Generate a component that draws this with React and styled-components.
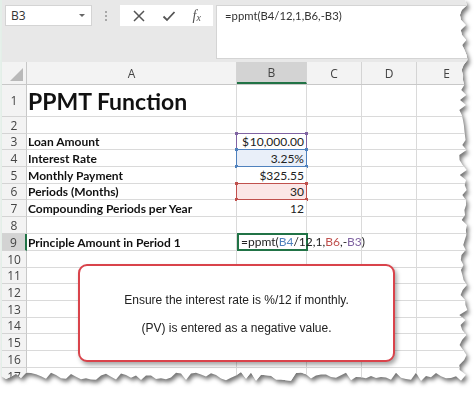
import React from "react";
import styled, { createGlobalStyle } from "styled-components";

const GlobalStyle = createGlobalStyle`
  body {
    margin: 0;
    background: #ffffff;
    font-family: "Lato", "Liberation Sans", sans-serif;
  }
`;

/* torn paper edge on the right and bottom */
let seed = 11;
const rnd = () => {
  seed = (seed * 9301 + 49297) % 233280;
  return seed / 233280;
};
const tornPts = ["0px 0px"];
for (let y = 0; y <= 374; y += 5) tornPts.push(`${459 + rnd() * 9}px ${y}px`);
for (let x = 466; x >= 0; x -= 5) tornPts.push(`${x}px ${372 + rnd() * 9}px`);
const TORN = `polygon(${tornPts.join(",")})`;

const colWidths = [210, 70, 55, 55, 60];
const colNames = ["A", "B", "C", "D", "E"];

const rows = [
  { n: 1, h: 32, a: "PPMT Function", title: true },
  { n: 2, h: 17 },
  { n: 3, h: 16, a: "Loan Amount", b: "10,000.00", money: true, hl: "purple" },
  { n: 4, h: 17, a: "Interest Rate", b: "3.25%", hl: "blue" },
  { n: 5, h: 17, a: "Monthly Payment", b: "$325.55" },
  { n: 6, h: 16, a: "Periods (Months)", b: "30", hl: "red" },
  { n: 7, h: 17, a: "Compounding Periods per Year", b: "12" },
  { n: 8, h: 17 },
  { n: 9, h: 17, a: "Principle Amount in Period 1", formula: true },
  { n: 10, h: 17 },
  { n: 11, h: 16 },
  { n: 12, h: 17 },
  { n: 13, h: 17 },
  { n: 14, h: 16 },
  { n: 15, h: 17 },
  { n: 16, h: 17 },
  { n: 17, h: 17 },
];

const hlColors = {
  purple: { line: "#8064a2", fill: "#ffffff" },
  blue: { line: "#4f81bd", fill: "#e9eff9" },
  red: { line: "#c0504d", fill: "#fbe6e6" },
};

export default function App() {
  return (
    <>
      <GlobalStyle />
      <Shadow>
        <Sheet>
          <TopBar>
            <NameBox>
              <span>B3</span>
              <Caret />
            </NameBox>
            <Grip>
              <i />
              <i />
              <i />
            </Grip>
            <IconBox>
              <svg width="14" height="14" viewBox="0 0 14 14">
                <path d="M2 2 L12 12 M12 2 L2 12" stroke="#555" strokeWidth="1.5" fill="none" />
              </svg>
              <svg width="14" height="14" viewBox="0 0 14 14">
                <path d="M1.5 7.5 L5 11 L12.5 3" stroke="#555" strokeWidth="1.8" fill="none" />
              </svg>
              <Fx>
                f<sub>x</sub>
              </Fx>
            </IconBox>
            <FormulaBox>=ppmt(B4/12,1,B6,-B3)</FormulaBox>
          </TopBar>

          <HeaderRow>
            <Corner>
              <svg width="13" height="13" viewBox="0 0 13 13">
                <path d="M13 0 L13 13 L0 13 Z" fill="#b9b9b9" />
              </svg>
            </Corner>
            {colNames.map((c, i) => (
              <ColHead key={c} $w={colWidths[i]} $active={c === "B"}>
                {c}
              </ColHead>
            ))}
          </HeaderRow>

          <Body>
            {rows.map((r) => (
              <Row key={r.n} $h={r.h}>
                <RowHead $active={r.n === 9}>{r.n}</RowHead>
                <Cell $w={colWidths[0]} $title={r.title}>
                  {r.a}
                </Cell>
                <ValueCell $w={colWidths[1]} $hl={r.hl} $money={r.money}>
                  {r.money && <span>$</span>}
                  {r.b && <span>{r.b}</span>}
                  {r.hl && (
                    <>
                      <Handle $c={hlColors[r.hl].line} $top $left />
                      <Handle $c={hlColors[r.hl].line} $top />
                      <Handle $c={hlColors[r.hl].line} $left />
                      <Handle $c={hlColors[r.hl].line} />
                    </>
                  )}
                  {r.formula && (
                    <Editing>
                      =ppmt(<Ref $c="#4f81bd">B4</Ref>/12,1,<Ref $c="#c0504d">B6</Ref>,-
                      <Ref $c="#8064a2">B3</Ref>)<Cursor />
                    </Editing>
                  )}
                </ValueCell>
                <Cell $w={colWidths[2]} />
                <Cell $w={colWidths[3]} />
                <Cell $w={colWidths[4]} />
              </Row>
            ))}
            <Callout>
              <p>Ensure the interest rate is %/12 if monthly.</p>
              <p>(PV) is entered as a negative value.</p>
            </Callout>
          </Body>
        </Sheet>
      </Shadow>
    </>
  );
}

const Shadow = styled.div`
  width: 474px;
  height: 395px;
  filter: drop-shadow(2px 3px 2px rgba(0, 0, 0, 0.55));
`;

const Sheet = styled.div`
  width: 474px;
  height: 395px;
  background: #ffffff;
  clip-path: ${TORN};
  display: flex;
  flex-direction: column;
  overflow: hidden;
  border-left: 2px solid #e3efe8;
  box-sizing: border-box;
`;

const TopBar = styled.div`
  height: 62px;
  flex: none;
  background: #e8e8e8;
  display: flex;
  align-items: flex-start;
  padding: 5px 0 0 3px;
  box-sizing: border-box;
`;

const NameBox = styled.div`
  width: 87px;
  height: 21px;
  background: #fff;
  border: 1px solid #d4d4d4;
  box-sizing: border-box;
  display: flex;
  align-items: center;
  justify-content: space-between;
  padding: 0 6px 0 5px;
  font-family: "Open Sans", sans-serif;
  font-size: 12px;
  color: #333;
`;

const Caret = styled.i`
  width: 0;
  height: 0;
  border-left: 3px solid transparent;
  border-right: 3px solid transparent;
  border-top: 3px solid #666;
`;

const Grip = styled.div`
  width: 28px;
  height: 21px;
  display: flex;
  flex-direction: column;
  align-items: center;
  justify-content: center;
  gap: 2px;
  i {
    width: 2px;
    height: 2px;
    background: #a8a8a8;
  }
`;

const IconBox = styled.div`
  width: 93px;
  height: 21px;
  background: #fff;
  display: flex;
  align-items: center;
  justify-content: space-around;
  padding: 0 4px;
  box-sizing: border-box;
`;

const Fx = styled.span`
  font-family: "Liberation Serif", serif;
  font-style: italic;
  font-size: 14px;
  color: #555;
  sub {
    font-size: 10px;
    vertical-align: -1px;
  }
`;

const FormulaBox = styled.div`
  flex: 1;
  margin-left: 3px;
  height: 54px;
  background: #fff;
  border: 1px solid #d4d4d4;
  border-right: none;
  box-sizing: border-box;
  padding: 3px 8px;
  font-family: "Lato", sans-serif;
  font-size: 11.3px;
  color: #333;
`;

const HeaderRow = styled.div`
  display: flex;
  height: 23px;
  flex: none;
  background: #f3f3f3;
  border-bottom: 1px solid #c8c8c8;
  box-sizing: border-box;
`;

const Corner = styled.div`
  width: 25px;
  flex: none;
  display: flex;
  align-items: flex-end;
  justify-content: flex-end;
  padding: 0 3px 3px 0;
  box-sizing: border-box;
  border-right: 1px solid #c8c8c8;
`;

const ColHead = styled.div`
  width: ${(p) => p.$w}px;
  flex: none;
  display: flex;
  align-items: center;
  justify-content: center;
  font-family: "Open Sans", sans-serif;
  font-size: 12px;
  color: #444;
  box-sizing: border-box;
  border-right: 1px solid #d4d4d4;
  background: ${(p) => (p.$active ? "#d3d3d3" : "transparent")};
  border-bottom: ${(p) => (p.$active ? "2px solid #217346" : "none")};
`;

const Body = styled.div`
  position: relative;
  display: flex;
  flex-direction: column;
`;

const Row = styled.div`
  display: flex;
  height: ${(p) => p.$h}px;
  flex: none;
`;

const RowHead = styled.div`
  width: 25px;
  flex: none;
  box-sizing: border-box;
  display: flex;
  align-items: center;
  justify-content: center;
  font-family: "Open Sans", sans-serif;
  font-size: 12px;
  color: #444;
  background: ${(p) => (p.$active ? "#d3d3d3" : "#f3f3f3")};
  border-bottom: 1px solid #d4d4d4;
  border-right: ${(p) => (p.$active ? "2px solid #217346" : "1px solid #c8c8c8")};
`;

const Cell = styled.div`
  width: ${(p) => p.$w}px;
  flex: none;
  box-sizing: border-box;
  border-right: 1px solid #dadada;
  border-bottom: 1px solid #dadada;
  display: flex;
  align-items: flex-end;
  padding: ${(p) => (p.$title ? "0 2px 2px 1px" : "0 2px 1px 1px")};
  white-space: nowrap;
  font-family: "Lato", sans-serif;
  font-weight: 700;
  font-size: ${(p) => (p.$title ? "23px" : "12px")};
  color: #111;
  line-height: 1.1;
`;

const ValueCell = styled.div`
  position: relative;
  width: ${(p) => p.$w}px;
  flex: none;
  box-sizing: border-box;
  border-right: 1px solid ${(p) => (p.$hl ? hlColors[p.$hl].line : "#dadada")};
  border-bottom: 1px solid ${(p) => (p.$hl ? hlColors[p.$hl].line : "#dadada")};
  border-left: ${(p) => (p.$hl ? `1px solid ${hlColors[p.$hl].line}` : "none")};
  border-top: ${(p) => (p.$hl ? `1px solid ${hlColors[p.$hl].line}` : "none")};
  margin-top: ${(p) => (p.$hl ? "-1px" : "0")};
  margin-left: ${(p) => (p.$hl ? "-1px" : "0")};
  width: ${(p) => (p.$hl ? p.$w + 1 : p.$w)}px;
  background: ${(p) => (p.$hl ? hlColors[p.$hl].fill : "#fff")};
  display: flex;
  align-items: flex-end;
  justify-content: ${(p) => (p.$money ? "space-between" : "flex-end")};
  padding: 0 2px 1px 5px;
  font-family: "Lato", sans-serif;
  font-size: 12px;
  color: #222;
  line-height: 1.1;
`;

const Handle = styled.i`
  position: absolute;
  width: 3px;
  height: 3px;
  background: ${(p) => p.$c};
  ${(p) => (p.$top ? "top: -2px;" : "bottom: -2px;")}
  ${(p) => (p.$left ? "left: -2px;" : "right: -2px;")}
`;

const Editing = styled.div`
  position: absolute;
  left: 0;
  top: -1px;
  width: 71px;
  height: 18px;
  border: 2px solid #217346;
  box-sizing: border-box;
  background: #fff;
  display: flex;
  align-items: center;
  padding-left: 2px;
  white-space: nowrap;
  overflow: visible;
  font-size: 12px;
  color: #222;
  z-index: 1;
`;

const Ref = styled.span`
  color: ${(p) => p.$c};
`;

const Cursor = styled.i`
  display: inline-block;
  width: 1px;
  height: 13px;
  margin-left: 1px;
  background: #111;
`;

const Callout = styled.div`
  position: absolute;
  left: 76px;
  top: 179px;
  width: 317px;
  height: 98px;
  box-sizing: border-box;
  border: 2px solid #d9434b;
  border-radius: 9px;
  background: #fff;
  box-shadow: 2px 3px 4px rgba(0, 0, 0, 0.35);
  display: flex;
  flex-direction: column;
  align-items: center;
  padding-top: 27px;
  gap: 13px;
  font-family: "Liberation Sans", Arial, sans-serif;
  font-size: 12px;
  color: #222;
  p {
    margin: 0;
    line-height: 15px;
  }
`;
